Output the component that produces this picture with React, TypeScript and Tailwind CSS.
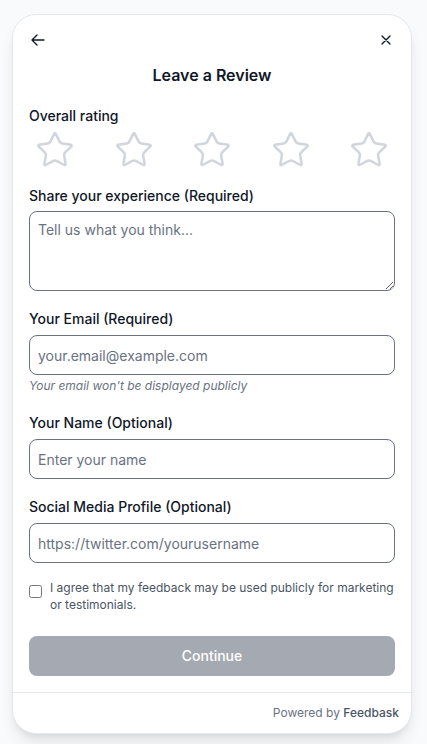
import React from "react";
import { Star } from "lucide-react";

export default function App() {
  const font = { fontFamily: "Inter, 'Noto Sans', sans-serif" };
  return (
    <div className="min-h-[744px] bg-[#f9fafb] pt-[14px] pl-3" style={font}>
      <div className="w-[400px] rounded-3xl border border-gray-200 bg-white shadow-lg flex flex-col">
        <div className="flex justify-between px-[13px] pt-[13px]">
          <button className="p-1 text-gray-900">
            <svg width="16" height="16" viewBox="0 0 24 24" fill="none" stroke="currentColor" strokeWidth="2" strokeLinecap="round" strokeLinejoin="round">
              <path d="M10.5 19.5 3 12m0 0 7.5-7.5M3 12h18" />
            </svg>
          </button>
          <button className="p-1 text-gray-900">
            <svg width="16" height="16" viewBox="0 0 24 24" fill="none" stroke="currentColor" strokeWidth="2" strokeLinecap="round" strokeLinejoin="round">
              <path d="M6 18 18 6M6 6l12 12" />
            </svg>
          </button>
        </div>
        <h1 className="mt-[11px] text-center text-base leading-6 font-semibold text-gray-900">Leave a Review</h1>
        <div className="px-4 pb-4 flex flex-col">
          <div className="mt-[19px] text-sm leading-5 font-medium text-gray-900">Overall rating</div>
          <div className="mt-1 flex justify-between">
            {[0, 1, 2, 3, 4].map((i) => (
              <button key={i} className="px-1.5">
                <Star size={40} strokeWidth={1.5} className="text-gray-300" />
              </button>
            ))}
          </div>
          <label className="mt-4 mb-[5px] text-sm leading-5 font-medium text-gray-900">Share your experience (Required)</label>
          <textarea
            placeholder="Tell us what you think..."
            className="h-20 w-full rounded-lg border border-gray-500 px-2 py-2 text-sm leading-5 text-gray-900 placeholder:text-gray-500 outline-none"
          />
          <label className="mt-[18px] mb-1.5 text-sm leading-5 font-medium text-gray-900">Your Email (Required)</label>
          <input
            placeholder="your.email@example.com"
            className="h-10 w-full rounded-lg border border-gray-500 px-2 text-sm text-gray-900 placeholder:text-gray-500 outline-none"
          />
          <p className="mt-[3px] text-xs leading-4 italic text-gray-500">Your email won't be displayed publicly</p>
          <label className="mt-[19px] mb-1.5 text-sm leading-5 font-medium text-gray-900">Your Name (Optional)</label>
          <input
            placeholder="Enter your name"
            className="h-10 w-full rounded-lg border border-gray-500 px-2 text-sm text-gray-900 placeholder:text-gray-500 outline-none"
          />
          <label className="mt-[18px] mb-1.5 text-sm leading-5 font-medium text-gray-900">Social Media Profile (Optional)</label>
          <input
            placeholder="https://twitter.com/yourusername"
            className="h-10 w-full rounded-lg border border-gray-500 px-2 text-sm text-gray-900 placeholder:text-gray-500 outline-none"
          />
          <div className="mt-4 flex items-start gap-2">
            <input type="checkbox" className="mt-[6px] h-[13px] w-[13px] shrink-0" />
            <span className="text-xs leading-[17px] text-gray-600">
              I agree that my feedback may be used publicly for marketing or testimonials.
            </span>
          </div>
          <button className="mt-[23px] h-10 w-full rounded-lg bg-[#a5a9b2] text-sm font-medium text-white">Continue</button>
        </div>
        <div className="border-t border-gray-200 px-3 py-3 text-right text-xs leading-4 text-gray-500">
          Powered by <span className="font-medium text-gray-600">Feedbask</span>
        </div>
      </div>
    </div>
  );
}
